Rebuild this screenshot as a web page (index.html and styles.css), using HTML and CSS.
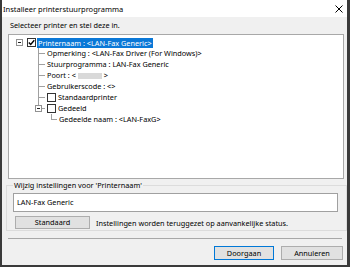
FILE: index.html
```html
<!DOCTYPE html>
<html lang="nl">
<head>
<meta charset="utf-8">
<title>Installeer printerstuurprogramma</title>
<link rel="stylesheet" href="styles.css">
</head>
<body>
<div class="window">
  <div class="titlebar">
    <span class="title">Installeer printerstuurprogramma</span>
    <svg class="close" width="8" height="8" viewBox="0 0 8 8"><path d="M0.5 0.5 L7.5 7.5 M7.5 0.5 L0.5 7.5" stroke="#000" stroke-width="1" fill="none"/></svg>
  </div>
  <div class="body">
    <div class="intro">Selecteer printer en stel deze in.</div>
    <div class="tree">
      <div class="row lvl0">
        <span class="exp"><span class="minus"></span></span>
        <span class="cb"><svg width="7" height="7" viewBox="0 0 7 7"><path d="M0.8 3.4 L2.7 5.4 L6.3 1.2" stroke="#000" stroke-width="1.4" fill="none"/></svg></span>
        <span class="label sel">Printernaam : &lt;LAN-Fax Generic&gt;</span>
      </div>
      <div class="row lvl1"><span class="conn"></span><span class="label">Opmerking : &lt;LAN-Fax Driver (For Windows)&gt;</span></div>
      <div class="row lvl1"><span class="conn"></span><span class="label">Stuurprogramma : LAN-Fax Generic</span></div>
      <div class="row lvl1"><span class="conn"></span><span class="label">Poort : &lt;<span class="redact"></span>&gt;</span></div>
      <div class="row lvl1"><span class="conn"></span><span class="label">Gebruikerscode : &lt;&gt;</span></div>
      <div class="row lvl1"><span class="conn"></span><span class="cb"></span><span class="label">Standaardprinter</span></div>
      <div class="row lvl1"><span class="conn last"><span class="exp on-line"><span class="minus"></span></span></span><span class="cb"></span><span class="label">Gedeeld</span></div>
      <div class="row lvl2"><span class="conn last short"></span><span class="label">Gedeelde naam : &lt;LAN-FaxG&gt;</span></div>
    </div>
    <fieldset class="group">
      <legend>Wijzig instellingen voor 'Printernaam'</legend>
      <div class="input">LAN-Fax Generic</div>
      <div class="resetrow">
        <button class="btn reset">Standaard</button>
        <span class="msg">Instellingen worden teruggezet op aanvankelijke status.</span>
      </div>
    </fieldset>
    <div class="sep"></div>
    <div class="actions">
      <button class="btn default">Doorgaan</button>
      <button class="btn cancel">Annuleren</button>
    </div>
  </div>
</div>
</body>
</html>
```
FILE: styles.css
```css
html, body {
  margin: 0;
  padding: 0;
}
body {
  width: 350px;
  height: 267px;
  overflow: hidden;
  font-family: "Noto Sans", "DejaVu Sans", sans-serif;
  font-size: 7.3px;
  color: #000;
}
.window {
  box-sizing: border-box;
  width: 350px;
  height: 267px;
  border-left: 2px solid #3a3a3a;
  border-right: 3px solid #3a3a3a;
  border-bottom: 2px solid #3a3a3a;
  display: flex;
  flex-direction: column;
  background: #f0f0f0;
}
.titlebar {
  height: 17px;
  flex: none;
  background: #fff;
  display: flex;
  align-items: center;
  padding-left: 1px;
  padding-right: 4px;
}
.title {
  font-size: 7.5px;
  flex: 1;
  padding-top: 1px;
}
.close {
  display: block;
}
.body {
  flex: 1;
  display: flex;
  flex-direction: column;
}
.intro {
  margin: 3px 0 0 8px;
  height: 10px;
  line-height: 10px;
}
.tree {
  box-sizing: border-box;
  margin: 4px 3px 0 6px;
  height: 145px;
  background: #fff;
  border: 1px solid #a8a8a8;
  padding: 2px 0 0 7px;
}
.row {
  display: flex;
  align-items: center;
  height: 11px;
  line-height: 11px;
  white-space: nowrap;
}
.row.lvl1 { padding-left: 22px; }
.row.lvl2 { padding-left: 35px; }
.exp {
  box-sizing: border-box;
  width: 7px;
  height: 7px;
  border: 1px solid #919191;
  background: #fff;
  display: flex;
  align-items: center;
  justify-content: center;
  flex: none;
}
.minus {
  width: 3px;
  height: 1px;
  background: #222;
}
.cb {
  box-sizing: border-box;
  width: 9px;
  height: 9px;
  border: 1px solid #333;
  background: #fff;
  display: flex;
  align-items: center;
  justify-content: center;
  flex: none;
  margin-left: 2px;
}
.lvl0 .cb { margin-left: 4px; }
.cb svg { display: block; }
.label {
  margin-left: 2px;
}
.lvl0 .label { margin-left: 1px; }
.label.sel {
  background: #0a78d7;
  color: #fff;
  padding: 0 1px;
  height: 10px;
  line-height: 10px;
}
.conn {
  width: 7px;
  height: 11px;
  flex: none;
  display: flex;
  align-items: center;
  background:
    linear-gradient(#a0a0a0, #a0a0a0) left top / 1px 100% no-repeat,
    linear-gradient(#a0a0a0, #a0a0a0) left 5px / 100% 1px no-repeat;
}
.conn.last {
  background:
    linear-gradient(#a0a0a0, #a0a0a0) left top / 1px 6px no-repeat,
    linear-gradient(#a0a0a0, #a0a0a0) left 5px / 100% 1px no-repeat;
}
.conn.short { width: 6px; }
.exp.on-line { margin-left: -3px; }
.redact {
  display: inline-block;
  width: 24px;
  height: 6px;
  margin: 0 2px;
  background: #d9d9d9;
  vertical-align: middle;
}
.group {
  margin: 1px 0 0 4px;
  padding: 0 6px 1px 6px;
  border: 1px solid #dcdcdc;
  min-width: 0;
}
.group legend {
  padding: 0 1px;
  line-height: 10px;
  height: 10px;
}
.input {
  box-sizing: border-box;
  margin-top: 3px;
  height: 19px;
  border: 1px solid #a0a0a0;
  background: #fff;
  padding-left: 3px;
  line-height: 17px;
  width: 325px;
}
.resetrow {
  display: flex;
  align-items: center;
  margin-top: 4px;
}
.btn {
  box-sizing: border-box;
  font: inherit;
  color: #000;
  background: #e1e1e1;
  border: 1px solid #adadad;
  padding: 0;
  margin: 0;
  line-height: 11px;
}
.btn.reset {
  margin-left: 2px;
  width: 75px;
  height: 13px;
}
.msg {
  margin-left: 6px;
}
.sep {
  margin: 7px 5px 0 6px;
  height: 1px;
  background: #a8a8a8;
}
.actions {
  display: flex;
  justify-content: flex-end;
  gap: 7px;
  margin: 7px 4px 0 0;
}
.actions .btn {
  height: 14px;
}
.btn.default {
  width: 60px;
  border-color: #0078d7;
}
.btn.cancel {
  width: 62px;
}
```
